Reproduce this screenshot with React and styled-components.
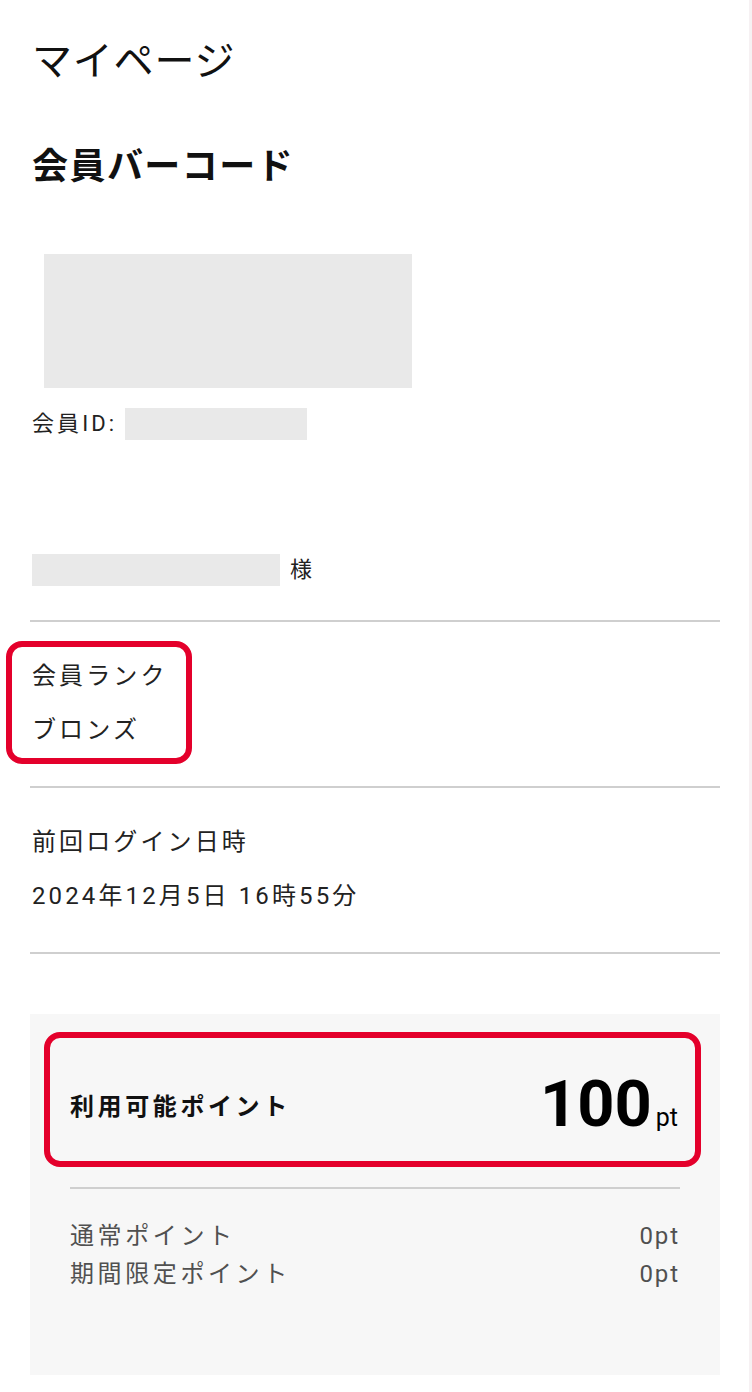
import styled, { createGlobalStyle } from "styled-components"

const GlobalStyle = createGlobalStyle`
    html, body {
        margin: 0;
        padding: 0;
        background: #fff;
    }
    body {
        font-family: Roboto, "Noto Sans CJK JP", sans-serif;
        color: #111;
    }
`

const App = () => {
  return (
    <>
      <GlobalStyle />
      <Page>
        <Title>マイページ</Title>
        <Heading>会員バーコード</Heading>
        <Barcode />
        <IdRow>
          <IdLabel>会員ID:</IdLabel>
          <Mask w={182} />
        </IdRow>
        <NameRow>
          <Mask w={248} />
          <Honorific>様</Honorific>
        </NameRow>

        <InfoList>
          <InfoSection>
            <Highlight top={-20} right={-24} bottom={-19} left={-24}>
              <InfoLine>会員ランク</InfoLine>
              <InfoLine>ブロンズ</InfoLine>
            </Highlight>
          </InfoSection>
          <InfoSection>
            <InfoLine>前回ログイン日時</InfoLine>
            <InfoLine>2024年12月5日 16時55分</InfoLine>
          </InfoSection>
        </InfoList>

        <PointPanel>
          <PointHighlight top={-32} right={-21} bottom={-23} left={-26}>
            <PointRow>
              <PointLabel>利用可能ポイント</PointLabel>
              <PointValue>
                100<Unit>pt</Unit>
              </PointValue>
            </PointRow>
          </PointHighlight>
          <PanelDivider />
          <DetailList>
            <DetailRow>
              <span>通常ポイント</span>
              <DetailValue>0pt</DetailValue>
            </DetailRow>
            <DetailRow>
              <span>期間限定ポイント</span>
              <DetailValue>0pt</DetailValue>
            </DetailRow>
          </DetailList>
        </PointPanel>
      </Page>
    </>
  )
}

const Page = styled.div`
    box-sizing: border-box;
    width: 752px;
    min-height: 1392px;
    padding: 38px 29px 17px 30px;
    border-right: 3px solid #f6f1f3;
`
const Title = styled.h1`
    margin: 0;
    font-size: 40px;
    line-height: 48px;
    font-weight: 400;
    letter-spacing: 0.02em;
    padding-left: 2px;
`
const Heading = styled.h2`
    margin: 57px 0 0;
    font-size: 36px;
    line-height: 48px;
    font-weight: 700;
    letter-spacing: 0.04em;
    padding-left: 2px;
`
const Barcode = styled.div`
    width: 368px;
    height: 134px;
    margin: 63px 0 0 14px;
    background: #e9e9e9;
`
const IdRow = styled.div`
    display: flex;
    align-items: center;
    gap: 8px;
    margin-top: 20px;
    padding-left: 2px;
`
const IdLabel = styled.span`
    font-size: 22px;
    line-height: 32px;
    letter-spacing: 0.14em;
    color: #222;
`
const Mask = styled.div`
    width: ${props => props.w}px;
    height: 32px;
    background: #e9e9e9;
`
const NameRow = styled.div`
    display: flex;
    align-items: center;
    gap: 10px;
    margin-top: 114px;
    padding-left: 2px;
`
const Honorific = styled.span`
    font-size: 22px;
    line-height: 32px;
    color: #222;
`
const InfoList = styled.div`
    margin-top: 34px;
    border-top: 2px solid #cfcfcf;
`
const InfoSection = styled.section`
    padding: 39px 0 41px;
    border-bottom: 2px solid #cfcfcf;
`
const Highlight = styled.div`
    position: relative;
    width: fit-content;
    &::after {
        content: "";
        position: absolute;
        top: ${props => props.top}px;
        right: ${props => props.right}px;
        bottom: ${props => props.bottom}px;
        left: ${props => props.left}px;
        border: 6px solid #e4002b;
        border-radius: 16px;
        pointer-events: none;
    }
`
const PointHighlight = styled(Highlight)`
    width: auto;
`
const InfoLine = styled.p`
    margin: 0;
    font-size: 24px;
    line-height: 30px;
    letter-spacing: 0.13em;
    color: #222;
    padding-left: 2px;
    & + & {
        margin-top: 24px;
    }
`
const PointPanel = styled.div`
    margin-top: 60px;
    background: #f7f7f7;
    padding: 50px 40px 82px;
`
const PointRow = styled.div`
    display: flex;
    align-items: center;
    justify-content: space-between;
    height: 80px;
    padding-right: 2px;
`
const PointLabel = styled.span`
    font-size: 24px;
    font-weight: 700;
    letter-spacing: 0.15em;
    color: #111;
`
const PointValue = styled.span`
    font-size: 65px;
    font-weight: 700;
    line-height: 1;
    color: #000;
`
const Unit = styled.span`
    font-size: 25px;
    font-weight: 400;
    margin-left: 4px;
`
const PanelDivider = styled.hr`
    margin: 43px 0 0;
    border: none;
    border-top: 2px solid #cfcfcf;
`
const DetailList = styled.div`
    margin-top: 28px;
`
const DetailRow = styled.div`
    display: flex;
    justify-content: space-between;
    font-size: 24px;
    line-height: 38px;
    letter-spacing: 0.15em;
    color: #505050;
`
const DetailValue = styled.span`
    letter-spacing: 0.08em;
`

export default App
